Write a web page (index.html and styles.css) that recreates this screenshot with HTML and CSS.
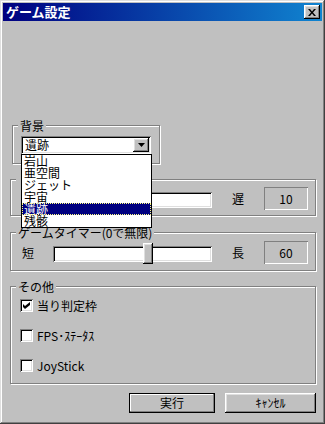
FILE: index.html
```html
<!DOCTYPE html>
<html lang="ja">
<head>
  <meta charset="UTF-8" />
  <title>ゲーム設定</title>
  <link rel="stylesheet" href="styles.css">
</head>
<body>
  <div class="window">
    <div class="titlebar">
      <span class="title">ゲーム設定</span>
      <button class="close-btn" type="button">
        <svg width="8" height="7" viewBox="0 0 8 7"><path d="M0 0h2l2 2.4 2-2.4h2l-3 3.5 3 3.5h-2l-2-2.4-2 2.4h-2l3-3.5z" fill="#000"/></svg>
      </button>
    </div>

    <div class="content">
      <fieldset class="group group-bg">
        <legend>背景</legend>
        <div class="group-body bg-body">
          <div class="combo">
            <span class="combo-text">遺跡</span>
            <span class="combo-btn">
              <svg width="7" height="4" viewBox="0 0 7 4"><path d="M0 0h7l-3.5 4z" fill="#000"/></svg>
            </span>
            <ul class="combo-list">
              <li>岩山</li>
              <li>亜空間</li>
              <li>ジェット</li>
              <li>宇宙</li>
              <li class="selected">遺跡</li>
              <li>残骸</li>
            </ul>
          </div>
        </div>
      </fieldset>

      <!-- this group sits under the open combo list -->
      <fieldset class="group group-speed">
        <legend><span class="covered">ゲームスピード</span></legend>
        <div class="group-body slider-row">
          <span class="slider-label covered">速</span>
          <div class="slider"><span class="thumb" style="left: 40px"></span></div>
          <span class="slider-label">遅</span>
          <span class="value-box">10</span>
        </div>
      </fieldset>

      <fieldset class="group group-timer">
        <legend>ゲームタイマー(0で無限)</legend>
        <div class="group-body slider-row">
          <span class="slider-label">短</span>
          <div class="slider"><span class="thumb" style="left: 90px"></span></div>
          <span class="slider-label">長</span>
          <span class="value-box">60</span>
        </div>
      </fieldset>

      <fieldset class="group group-other">
        <legend>その他</legend>
        <div class="group-body check-list">
          <label class="check">
            <span class="check-box">
              <svg width="7" height="7" viewBox="0 0 7 7"><path d="M0 2l2 2 5-4v3l-5 4-2-2z" fill="#000"/></svg>
            </span>
            当り判定枠
          </label>
          <label class="check">
            <span class="check-box"></span>
            FPS･ｽﾃｰﾀｽ
          </label>
          <label class="check">
            <span class="check-box"></span>
            JoyStick
          </label>
        </div>
      </fieldset>

      <div class="buttons">
        <button class="btn btn-default" type="button">実行</button>
        <button class="btn btn-cancel" type="button">ｷｬﾝｾﾙ</button>
      </div>
    </div>
  </div>
</body>
</html>
```

FILE: styles.css
```css
* {
  box-sizing: border-box;
}

html,
body {
  margin: 0;
}

body {
  font-family: "Noto Sans CJK JP", "Noto Sans", sans-serif;
  font-size: 12px;
  line-height: 12px;
  color: #000;
  background-color: #c0c0c0;
}

.window {
  width: 325px;
  height: 424px;
  padding: 3px;
  background-color: #c0c0c0;
  box-shadow: inset -1px -1px #404040, inset 1px 1px #dfdfdf, inset -2px -2px #808080, inset 2px 2px #fff;
}

.titlebar {
  height: 18px;
  display: flex;
  align-items: center;
  justify-content: space-between;
  padding: 0 2px 0 3px;
  background: linear-gradient(to right, #000080, #1084d0);
  color: #fff;
  font-size: 13px;
  font-weight: bold;
}

button {
  font: inherit;
  color: #000;
  border: none;
  padding: 0;
  margin: 0;
  background-color: #c0c0c0;
}

.close-btn {
  width: 16px;
  height: 14px;
  display: flex;
  align-items: center;
  justify-content: center;
  box-shadow: inset -1px -1px #000, inset 1px 1px #fff, inset -2px -2px #808080, inset 2px 2px #dfdfdf;
}

.content {
  padding: 0 6px 0 7px;
}

/* group boxes */
.group {
  margin: 0;
  padding: 0;
  min-width: 0;
  border: 1px solid #808080;
  box-shadow: inset 1px 1px #fff, 1px 1px #fff;
}

.group legend {
  margin-left: 5px;
  padding: 0 2px;
  line-height: 13px;
  background-color: #c0c0c0;
}

.covered {
  visibility: hidden;
}

.group-bg {
  width: 148px;
  margin: 98px 0 0 2px;
}

.bg-body {
  padding: 4px 0 9px 8px;
}

.group-speed {
  margin-top: 9px;
}

.group-speed .group-body {
  padding: 1px 0 5px 11px;
}

.group-timer {
  margin-top: 10px;
}

.group-timer .group-body {
  padding: 2px 0 6px 11px;
}

.group-other {
  margin-top: 9px;
}

/* combo box */
.combo {
  position: relative;
  width: 130px;
  height: 18px;
  display: flex;
  align-items: center;
  padding: 2px;
  background-color: #fff;
  box-shadow: inset 1px 1px #808080, inset -1px -1px #fff, inset 2px 2px #000, inset -2px -2px #dfdfdf;
}

.combo-text {
  padding-left: 2px;
}

.combo-btn {
  margin-left: auto;
  width: 16px;
  height: 14px;
  display: flex;
  align-items: center;
  justify-content: center;
  background-color: #c0c0c0;
  box-shadow: inset -1px -1px #000, inset 1px 1px #fff, inset -2px -2px #808080, inset 2px 2px #dfdfdf;
}

.combo-list {
  position: absolute;
  top: 100%;
  left: 0;
  z-index: 10;
  width: 131px;
  margin: 0;
  padding: 0;
  list-style: none;
  background-color: #fff;
  border: 1px solid #000;
}

.combo-list li {
  height: 12px;
  line-height: 12px;
  padding-left: 2px;
}

.combo-list .selected {
  background-color: #000080;
  color: #fff;
  outline: 1px dotted #ffff80;
  outline-offset: -1px;
}

/* sliders */
.slider-row {
  display: flex;
  align-items: flex-start;
  height: 23px;
  box-sizing: content-box;
}

.slider-label {
  width: 12px;
  margin-top: 6px;
}

.slider {
  position: relative;
  width: 159px;
  height: 16px;
  margin: 5px 20px 0 19px;
  background-color: #fff;
  box-shadow: inset 1px 1px #808080, inset -1px -1px #fff, inset 2px 2px #000, inset -2px -2px #dfdfdf;
}

.thumb {
  position: absolute;
  top: -3px;
  width: 10px;
  height: 21px;
  background-color: #c0c0c0;
  box-shadow: inset -1px -1px #000, inset 1px 1px #fff, inset -2px -2px #808080, inset 2px 2px #dfdfdf;
}

.value-box {
  width: 44px;
  height: 23px;
  margin-left: 20px;
  display: flex;
  align-items: center;
  justify-content: center;
  box-shadow: inset 1px 1px #808080, inset -1px -1px #fff;
}

/* checkboxes */
.check-list {
  padding: 6px 0 11px 9px;
}

.check {
  display: flex;
  align-items: center;
  gap: 4px;
  height: 13px;
}

.check + .check {
  margin-top: 17px;
}

.check-box {
  width: 13px;
  height: 13px;
  display: flex;
  align-items: center;
  justify-content: center;
  background-color: #fff;
  box-shadow: inset 1px 1px #808080, inset -1px -1px #fff, inset 2px 2px #000, inset -2px -2px #dfdfdf;
}

/* bottom buttons */
.buttons {
  display: flex;
  justify-content: flex-end;
  gap: 10px;
  margin-top: 9px;
}

.btn {
  height: 20px;
  box-shadow: inset -1px -1px #000, inset 1px 1px #fff, inset -2px -2px #808080, inset 2px 2px #dfdfdf;
}

.btn-default {
  width: 86px;
  border: 1px solid #000;
  box-shadow: inset -1px -1px #808080, inset 1px 1px #fff;
}

.btn-cancel {
  width: 91px;
}
```
